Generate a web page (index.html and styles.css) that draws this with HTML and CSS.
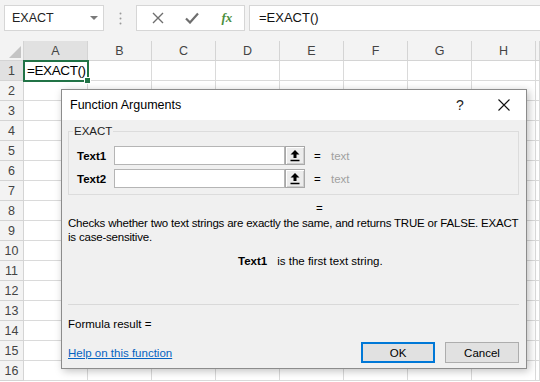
FILE: index.html
```html
<!DOCTYPE html>
<html lang="en">
<head>
    <meta charset="UTF-8">
    <title>Function Arguments</title>
    <link rel="stylesheet" href="styles.css">
</head>
<body>
    <div class="topbar">
        <div class="namebox"><span>EXACT</span><span class="caret"></span></div>
        <div class="grip">
            <svg width="3" height="13" viewBox="0 0 3 13"><circle cx="1.5" cy="1.5" r="1" fill="#9a9a9a"/><circle cx="1.5" cy="6.5" r="1" fill="#9a9a9a"/><circle cx="1.5" cy="11.5" r="1" fill="#9a9a9a"/></svg>
        </div>
        <div class="fxbtns">
            <span class="fxbtn">
                <svg width="12" height="12" viewBox="0 0 12 12"><path d="M1 1 L11 11 M11 1 L1 11" stroke="#6e6e6e" stroke-width="1.4" fill="none"/></svg>
            </span>
            <span class="fxbtn">
                <svg width="14" height="12" viewBox="0 0 14 12"><path d="M1 6.5 L5 10.5 L13 1.5" stroke="#6e6e6e" stroke-width="2.2" fill="none"/></svg>
            </span>
            <span class="fxbtn fx">fx</span>
        </div>
        <div class="formula">=EXACT()</div>
    </div>

    <div class="sheet" id="sheet"></div>

    <div class="dialog">
        <div class="dlg-title">
            <span class="dlg-name">Function Arguments</span>
            <span class="dlg-btn">?</span>
            <span class="dlg-btn">
                <svg width="12" height="12" viewBox="0 0 12 12"><path d="M0.5 0.5 L11.5 11.5 M11.5 0.5 L0.5 11.5" stroke="#111" stroke-width="1.1" fill="none"/></svg>
            </span>
        </div>
        <div class="dlg-body">
            <fieldset class="args">
                <legend>EXACT</legend>
                <div class="arg-row">
                    <label>Text1</label>
                    <span class="ref-input"></span>
                    <span class="ref-btn">
                        <svg width="12" height="13" viewBox="0 0 12 13"><path d="M6 1 L1.5 5.5 H4.5 V9 H7.5 V5.5 H10.5 Z" fill="#000"/><path d="M1.5 11.5 H10.5" stroke="#000" stroke-width="1.5"/></svg>
                    </span>
                    <span class="eq">=</span>
                    <span class="val">text</span>
                </div>
                <div class="arg-row">
                    <label>Text2</label>
                    <span class="ref-input"></span>
                    <span class="ref-btn">
                        <svg width="12" height="13" viewBox="0 0 12 13"><path d="M6 1 L1.5 5.5 H4.5 V9 H7.5 V5.5 H10.5 Z" fill="#000"/><path d="M1.5 11.5 H10.5" stroke="#000" stroke-width="1.5"/></svg>
                    </span>
                    <span class="eq">=</span>
                    <span class="val">text</span>
                </div>
            </fieldset>
            <div class="result-eq">=</div>
            <p class="desc">Checks whether two text strings are exactly the same, and returns TRUE or FALSE. EXACT<br>is case-sensitive.</p>
            <p class="arg-help"><b>Text1</b>is the first text string.</p>
            <div class="sep"></div>
            <p class="formula-result">Formula result =</p>
            <div class="dlg-footer">
                <a href="#" class="help">Help on this function</a>
                <button class="btn primary">OK</button>
                <button class="btn">Cancel</button>
            </div>
        </div>
    </div>

    <script>
        // build the worksheet grid
        const sheet = document.getElementById('sheet');
        const cols = ['A', 'B', 'C', 'D', 'E', 'F', 'G', 'H', ''];

        function add(cls, text) {
            const el = document.createElement('div');
            el.className = cls;
            if (text) el.textContent = text;
            sheet.appendChild(el);
            return el;
        }

        const corner = add('hd corner');
        corner.innerHTML = '<svg width="12" height="12" viewBox="0 0 12 12"><path d="M12 0 V12 H0 Z" fill="#c4c4c4"/></svg>';
        cols.forEach((c, i) => add(i === 0 ? 'hd col sel' : 'hd col', c));

        for (let r = 1; r <= 16; r++) {
            add(r === 1 ? 'hd row sel' : 'hd row', String(r));
            cols.forEach((c, i) => {
                if (r === 1 && i === 0) {
                    add('cell active', '=EXACT()');
                } else {
                    add('cell');
                }
            });
        }
    </script>
</body>
</html>
```

FILE: styles.css
```css
body {
    margin: 0;
    width: 540px;
    height: 382px;
    overflow: hidden;
    position: relative;
    background: #fff;
    font-family: "Liberation Sans", Arial, sans-serif;
    color: #000;
}

/* formula bar */
.topbar {
    height: 41px;
    box-sizing: border-box;
    padding-top: 5px;
    background: #f3f3f3;
    display: flex;
    align-items: flex-start;
}
.namebox {
    margin-left: 4px;
    width: 100px;
    height: 26px;
    box-sizing: border-box;
    background: #fff;
    border: 1px solid #d6d6d6;
    display: flex;
    align-items: center;
    justify-content: space-between;
    padding: 0 5px 0 7px;
    font-size: 12.5px;
    color: #222;
}
.caret {
    width: 0;
    height: 0;
    border-left: 4px solid transparent;
    border-right: 4px solid transparent;
    border-top: 4px solid #7a7a7a;
}
.grip {
    width: 32px;
    height: 26px;
    display: flex;
    align-items: center;
    justify-content: center;
}
.fxbtns {
    width: 109px;
    height: 26px;
    box-sizing: border-box;
    background: #fff;
    border: 1px solid #d6d6d6;
    display: flex;
    align-items: center;
    padding-left: 4px;
}
.fxbtn {
    width: 35px;
    display: flex;
    justify-content: center;
    align-items: center;
}
.fx {
    font-family: "Liberation Serif", serif;
    font-style: italic;
    font-weight: bold;
    font-size: 13px;
    color: #4b8f3e;
}
.formula {
    flex: 1;
    margin-left: 4px;
    height: 26px;
    box-sizing: border-box;
    background: #fff;
    border: 1px solid #d6d6d6;
    border-right: none;
    padding-left: 9px;
    font-size: 13px;
    line-height: 24px;
    color: #111;
}

/* worksheet */
.sheet {
    display: grid;
    grid-template-columns: 24px repeat(8, 64px) 1fr;
    grid-auto-rows: 20px;
}
.hd {
    box-sizing: border-box;
    background: #f3f3f3;
    border-right: 1px solid #d4d4d4;
    border-bottom: 1px solid #d4d4d4;
    display: flex;
    align-items: center;
    justify-content: center;
    font-size: 12.5px;
    color: #444;
}
.hd.sel {
    background: #e1e1e1;
}
.corner {
    align-items: flex-end;
    justify-content: flex-end;
    padding: 0 2px 2px 0;
}
.cell {
    box-sizing: border-box;
    border-right: 1px solid #dadada;
    border-bottom: 1px solid #dadada;
}
.cell.active {
    position: relative;
    z-index: 1;
    outline: 2px solid #217346;
    outline-offset: -1px;
    padding-left: 3px;
    font-size: 13.5px;
    line-height: 20px;
    letter-spacing: -0.4px;
    white-space: nowrap;
}
.cell.active::after {
    content: "";
    position: absolute;
    right: -4px;
    bottom: -4px;
    width: 5px;
    height: 5px;
    background: #217346;
    border: 1px solid #fff;
}

/* dialog */
.dialog {
    position: absolute;
    left: 61px;
    top: 89px;
    width: 466px;
    height: 280px;
    box-sizing: border-box;
    border: 1px solid #8c8c8c;
    background: #f0f0f0;
    box-shadow: 2px 2px 8px rgba(0, 0, 0, 0.25);
    z-index: 2;
    font-size: 11.5px;
}
.dlg-title {
    height: 30px;
    background: #fff;
    display: flex;
    align-items: center;
    padding-left: 8px;
    font-size: 12.5px;
}
.dlg-name {
    flex: 1;
}
.dlg-btn {
    width: 44px;
    display: flex;
    justify-content: center;
    font-size: 14px;
    color: #222;
}
.dlg-body {
    padding: 3px 7px 0 6px;
}
.args {
    margin: 0;
    padding: 0 0 4px 4px;
    border: 1px solid #dcdcdc;
    height: 72px;
    box-sizing: border-box;
}
.args legend {
    padding: 0 1px;
    font-size: 11.5px;
    line-height: 16px;
    color: #222;
}
.arg-row {
    display: flex;
    align-items: center;
    height: 19px;
    margin-top: 4px;
    padding-left: 4px;
}
.arg-row:first-of-type {
    margin-top: 7px;
}
.arg-row label {
    width: 37px;
    font-weight: bold;
}
.ref-input {
    width: 171px;
    height: 19px;
    box-sizing: border-box;
    background: #fff;
    border: 1px solid #b5b5b5;
}
.ref-btn {
    width: 20px;
    height: 19px;
    box-sizing: border-box;
    background: #ececec;
    border: 1px solid #a8a8a8;
    box-shadow: inset 1px 1px 0 #fff, inset -1px -1px 0 #cfcfcf;
    display: flex;
    align-items: center;
    justify-content: center;
}
.eq {
    margin-left: 9px;
    width: 17px;
}
.val {
    color: #a0a0a0;
}
.result-eq {
    padding-left: 248px;
    margin-top: 6px;
    line-height: 14px;
}
.desc {
    margin: 1px 0 0 0;
    line-height: 14px;
    white-space: nowrap;
    letter-spacing: -0.2px;
}
.arg-help {
    margin: 10px 0 0 0;
    padding-left: 170px;
    line-height: 14px;
}
.arg-help b {
    margin-right: 10px;
}
.sep {
    margin-top: 36px;
    border-top: 1px solid #d9d9d9;
}
.formula-result {
    margin: 12px 0 0 0;
    line-height: 14px;
}
.dlg-footer {
    display: flex;
    align-items: center;
    margin-top: 11px;
    gap: 10px;
}
.help {
    flex: 1;
    color: #0563c1;
}
.btn {
    width: 74px;
    height: 21px;
    box-sizing: border-box;
    background: #e1e1e1;
    border: 1px solid #adadad;
    font-family: inherit;
    font-size: 11.5px;
    padding: 0;
}
.btn.primary {
    border: 2px solid #0078d7;
}
```
